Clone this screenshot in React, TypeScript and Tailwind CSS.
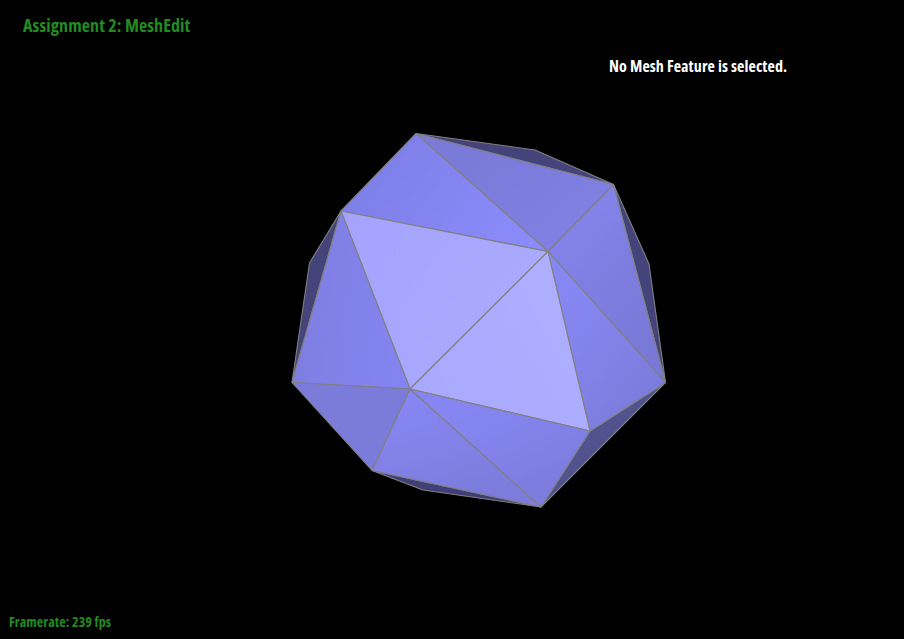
const condensed = { fontFamily: '"Open Sans", "Noto Sans", sans-serif', fontStretch: "75%" }

const faces = [
  // back faces peeking out
  { points: "416,133.5 535,150 613.5,184.5", fill: "#44447a" },
  { points: "613.5,184.5 649,264 665.5,382.5", fill: "#44447a" },
  { points: "341,211 309.5,263 292,382.5", fill: "#44447a" },
  { points: "372,470.5 423,490 541,507", fill: "#3f3f75" },
  { points: "590,431 665.5,382.5 541,507", fill: "#52528f" },
  // front faces
  { points: "416,133.5 613.5,184.5 548,251.5", fill: "url(#top)" },
  { points: "416,133.5 548,251.5 341,211", fill: "url(#topLeft)" },
  { points: "613.5,184.5 665.5,382.5 548,251.5", fill: "url(#right)" },
  { points: "548,251.5 665.5,382.5 590,431", fill: "url(#lowRight)" },
  { points: "341,211 548,251.5 410,389", fill: "url(#centerLeft)" },
  { points: "548,251.5 590,431 410,389", fill: "url(#centerRight)" },
  { points: "341,211 410,389 292,382.5", fill: "url(#left)" },
  { points: "292,382.5 410,389 372,470.5", fill: "#7b7bd9" },
  { points: "410,389 541,507 372,470.5", fill: "url(#bottom)" },
  { points: "410,389 590,431 541,507", fill: "url(#bottomRight)" },
]

function Mesh() {
  return (
    <svg width="904" height="400" viewBox="0 125 904 400" className="block">
      <defs>
        <linearGradient id="top" gradientUnits="userSpaceOnUse" x1="480" y1="150" x2="560" y2="250">
          <stop offset="0" stopColor="#7a7ad8" />
          <stop offset="1" stopColor="#8080e4" />
        </linearGradient>
        <linearGradient id="topLeft" gradientUnits="userSpaceOnUse" x1="400" y1="150" x2="530" y2="245">
          <stop offset="0" stopColor="#8080ea" />
          <stop offset="1" stopColor="#8b8bfc" />
        </linearGradient>
        <linearGradient id="right" gradientUnits="userSpaceOnUse" x1="560" y1="250" x2="660" y2="340">
          <stop offset="0" stopColor="#8282e8" />
          <stop offset="1" stopColor="#7878d6" />
        </linearGradient>
        <linearGradient id="lowRight" gradientUnits="userSpaceOnUse" x1="555" y1="300" x2="660" y2="385">
          <stop offset="0" stopColor="#8787f4" />
          <stop offset="1" stopColor="#7c7cdc" />
        </linearGradient>
        <linearGradient id="centerLeft" gradientUnits="userSpaceOnUse" x1="350" y1="220" x2="540" y2="330">
          <stop offset="0" stopColor="#a4a4ff" />
          <stop offset="1" stopColor="#aaaaff" />
        </linearGradient>
        <linearGradient id="centerRight" gradientUnits="userSpaceOnUse" x1="430" y1="380" x2="580" y2="300">
          <stop offset="0" stopColor="#a9a9ff" />
          <stop offset="1" stopColor="#afafff" />
        </linearGradient>
        <linearGradient id="left" gradientUnits="userSpaceOnUse" x1="300" y1="330" x2="400" y2="340">
          <stop offset="0" stopColor="#7e7ee2" />
          <stop offset="1" stopColor="#8484f0" />
        </linearGradient>
        <linearGradient id="bottom" gradientUnits="userSpaceOnUse" x1="420" y1="400" x2="450" y2="500">
          <stop offset="0" stopColor="#8686f2" />
          <stop offset="1" stopColor="#7c7cdc" />
        </linearGradient>
        <linearGradient id="bottomRight" gradientUnits="userSpaceOnUse" x1="470" y1="410" x2="510" y2="500">
          <stop offset="0" stopColor="#8686f2" />
          <stop offset="1" stopColor="#7c7cdf" />
        </linearGradient>
      </defs>
      {faces.map((f) => (
        <polygon key={f.points} points={f.points} fill={f.fill} stroke="#808080" strokeWidth="1.1" strokeLinejoin="round" />
      ))}
    </svg>
  )
}

export default function App() {
  return (
    <div className="flex h-[639px] w-[904px] flex-col overflow-hidden bg-black">
      <h1 className="ml-[23px] mt-[13px] h-[24px] text-[18px] font-bold leading-[24px] tracking-[0.1px] text-[#228b22]" style={condensed}>
        Assignment 2: MeshEdit
      </h1>
      <p className="ml-[609px] mt-[19px] h-[20px] text-[16px] font-bold leading-[20px] tracking-[0.1px] text-white" style={condensed}>
        No Mesh Feature is selected.
      </p>
      <div className="mt-[49px]">
        <Mesh />
      </div>
      <p className="ml-[9px] mt-auto mb-[9px] h-[16px] text-[14px] font-bold leading-[16px] tracking-[0.06px] text-[#228b22]" style={condensed}>
        Framerate: 239 fps
      </p>
    </div>
  )
}
